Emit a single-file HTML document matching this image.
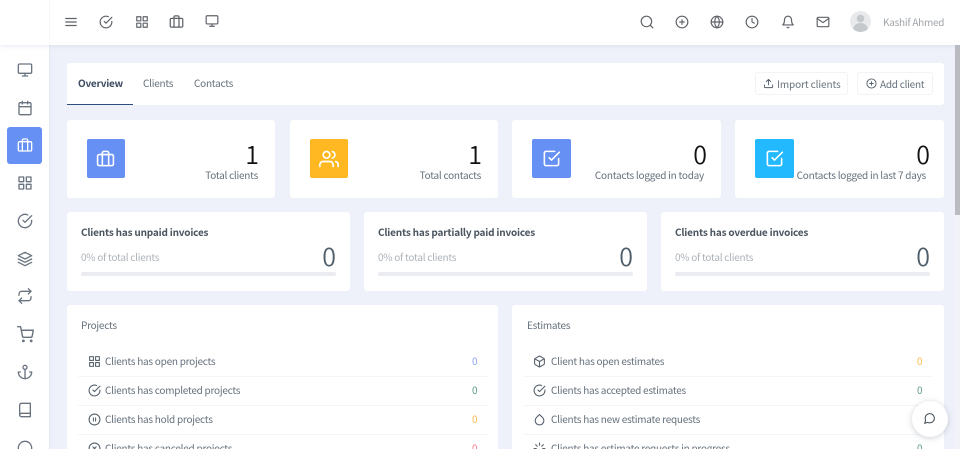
<!DOCTYPE html>
<html lang="en"><head><meta charset="utf-8"><title>Clients</title>
<style>
*{box-sizing:border-box}
html,body{margin:0;padding:0;width:960px;height:449px;overflow:hidden}
#w{width:960px;height:449px;overflow:hidden;position:relative;background:#eef1f9;font-family:"Noto Sans CJK JP","Liberation Sans",sans-serif;color:#4e5e6a;font-size:10px;letter-spacing:-.25px}
.a{position:absolute;white-space:nowrap}
.card{position:absolute;background:#fff;border-radius:3px}
svg{position:absolute;fill:none;stroke:currentColor;stroke-width:2;stroke-linecap:round;stroke-linejoin:round;overflow:visible}
.top{color:#5f6368}
.side{color:#6a7480}
.r{text-align:right}
.hr{position:absolute;height:1px;background:#f2f6fa}
.bar{position:absolute;height:4px;background:#eaecf2;border-radius:2px}
.t{font-size:10px;color:#65707b}
.b{font-size:10px;font-weight:700;color:#4a5560;letter-spacing:-.2px}
.m{font-size:10px;color:#adb3b9}
.n{font-size:25px;line-height:30px;color:#4e5e6a;font-weight:350;letter-spacing:0}
.k{font-size:25px;line-height:30px;color:#111;font-weight:350;letter-spacing:0}
</style></head><body>
<div id="w">

<div class="a" style="left:0;top:0;width:49px;height:449px;background:#fff;box-shadow:1px 0 2px rgba(190,195,215,.2)"></div>
<div class="a" style="left:0;top:0;width:960px;height:45px;background:#fff;box-shadow:0 1px 4px rgba(190,195,215,.35)"></div>
<div class="a" style="left:49px;top:0;width:1px;height:45px;background:#f8f8fa"></div>

<!-- scrollbar -->
<div class="a" style="left:955px;top:45px;width:5px;height:404px;background:#f1f3f9"></div>
<div class="a" style="left:955px;top:45px;width:5px;height:170px;background:#b9bbc0"></div>

<!-- top left icons -->
<svg class="top" style="left:64px;top:15px" width="14" height="14" viewBox="0 0 24 24" stroke-width="1.8"><path d="M3 6h18M3 12h18M3 18h18"/></svg>
<svg class="top" style="left:99px;top:15px" width="14" height="14" viewBox="0 0 24 24" stroke-width="1.9"><path d="M22 11.100V12a10 10 0 1 1-5.900-9.100"/><path d="M22 4 12 14l-3-3"/></svg>
<svg class="top" style="left:135px;top:15px" width="14" height="14" viewBox="0 0 24 24" stroke-width="1.9"><rect x="3" y="3" width="7" height="7"/><rect x="14" y="3" width="7" height="7"/><rect x="14" y="14" width="7" height="7"/><rect x="3" y="14" width="7" height="7"/></svg>
<svg class="top" style="left:169px;top:14px" width="15" height="15" viewBox="0 0 24 24" stroke-width="1.8"><rect x="2" y="7" width="20" height="14" rx="2"/><path d="M16 21V5a2 2 0 0 0-2-2h-4a2 2 0 0 0-2 2v16"/></svg>
<svg class="top" style="left:205px;top:14px" width="14" height="14" viewBox="0 0 24 24" stroke-width="1.9"><rect x="2" y="3" width="20" height="14" rx="2"/><path d="M8 21h8M12 17v4"/></svg>

<!-- top right icons -->
<svg class="top" style="left:640px;top:15px" width="14" height="14" viewBox="0 0 24 24" stroke-width="1.9"><circle cx="11" cy="11" r="9"/><path d="m22 22-4.500-4.500"/></svg>
<svg class="top" style="left:675px;top:15px" width="14" height="14" viewBox="0 0 24 24" stroke-width="1.9"><circle cx="12" cy="12" r="10"/><path d="M12 8v8M8 12h8"/></svg>
<svg class="top" style="left:710px;top:15px" width="14" height="14" viewBox="0 0 24 24" stroke-width="1.9"><circle cx="12" cy="12" r="10"/><path d="M2 12h20M12 2a15 15 0 0 1 4 10 15 15 0 0 1-4 10 15 15 0 0 1-4-10 15 15 0 0 1 4-10z"/></svg>
<svg class="top" style="left:745px;top:15px" width="14" height="14" viewBox="0 0 24 24" stroke-width="1.9"><circle cx="12" cy="12" r="10"/><path d="M12 6v6l4 2"/></svg>
<svg class="top" style="left:781px;top:15px" width="14" height="14" viewBox="0 0 24 24" stroke-width="1.9"><path d="M18 8a6 6 0 0 0-12 0c0 7-3 9-3 9h18s-3-2-3-9"/><path d="M13.700 21a2 2 0 0 1-3.400 0"/></svg>
<svg class="top" style="left:816px;top:15px" width="14" height="14" viewBox="0 0 24 24" stroke-width="1.9"><path d="M4 4h16a2 2 0 0 1 2 2v12a2 2 0 0 1-2 2H4a2 2 0 0 1-2-2V6a2 2 0 0 1 2-2z"/><path d="m22 6-10 7L2 6"/></svg>

<!-- avatar -->
<svg style="left:850px;top:11px;stroke:none" width="21" height="21" viewBox="0 0 21 21"><circle cx="10.500" cy="10.500" r="10.500" fill="#e8e9eb"/><circle cx="10.500" cy="7.500" r="3.800" fill="#c6c9cc"/><path d="M3.200 18c.6-4 3.600-6 7.300-6s6.700 2 7.300 6a10.500 10.500 0 0 1-14.600 0z" fill="#c6c9cc"/></svg>
<div class="a" style="left:883px;top:14px;font-size:10px;line-height:15px;color:#a0a5aa;letter-spacing:-.25px">Kashif Ahmed</div>

<!-- sidebar icons -->
<svg class="side" style="left:17px;top:62px" width="16" height="16" viewBox="0 0 24 24" stroke-width="1.8"><rect x="2" y="3" width="20" height="14" rx="2"/><path d="M8 21h8M12 17v4"/></svg>
<svg class="side" style="left:17px;top:100px" width="16" height="16" viewBox="0 0 24 24" stroke-width="1.8"><rect x="3" y="4" width="18" height="18" rx="2"/><path d="M16 2v4M8 2v4M3 10h18"/></svg>
<div class="a" style="left:7px;top:127px;width:35px;height:37px;background:#6690f4;border-radius:3px"></div>
<svg style="left:17px;top:137px;color:#fff" width="16" height="16" viewBox="0 0 24 24" stroke-width="1.8"><rect x="2" y="7" width="20" height="14" rx="2"/><path d="M16 21V5a2 2 0 0 0-2-2h-4a2 2 0 0 0-2 2v16"/></svg>
<svg class="side" style="left:17px;top:175px" width="16" height="16" viewBox="0 0 24 24" stroke-width="1.8"><rect x="3" y="3" width="7" height="7"/><rect x="14" y="3" width="7" height="7"/><rect x="14" y="14" width="7" height="7"/><rect x="3" y="14" width="7" height="7"/></svg>
<svg class="side" style="left:17px;top:213px" width="16" height="16" viewBox="0 0 24 24" stroke-width="1.8"><path d="M22 11.100V12a10 10 0 1 1-5.900-9.100"/><path d="M22 4 12 14l-3-3"/></svg>
<svg class="side" style="left:17px;top:251px" width="16" height="16" viewBox="0 0 24 24" stroke-width="1.8"><path d="M12 2 2 7l10 5 10-5-10-5z"/><path d="m2 17 10 5 10-5M2 12l10 5 10-5"/></svg>
<svg class="side" style="left:17px;top:288px" width="16" height="16" viewBox="0 0 24 24" stroke-width="1.800"><path d="m17 1 4 4-4 4"/><path d="M3 11V9a4 4 0 0 1 4-4h14"/><path d="m7 23-4-4 4-4"/><path d="M21 13v2a4 4 0 0 1-4 4H3"/></svg>
<svg class="side" style="left:17px;top:326px" width="17" height="17" viewBox="0 0 24 24" stroke-width="1.800"><circle cx="9" cy="21" r="1"/><circle cx="20" cy="21" r="1"/><path d="M1 1h4l2.700 13.400a2 2 0 0 0 2 1.600h9.700a2 2 0 0 0 2-1.600L23 6H6"/></svg>
<svg class="side" style="left:17px;top:364px" width="16" height="16" viewBox="0 0 24 24" stroke-width="1.800"><circle cx="12" cy="5" r="3"/><path d="M12 22V8M5 12H2a10 10 0 0 0 20 0h-3"/></svg>
<svg class="side" style="left:17px;top:402px" width="16" height="16" viewBox="0 0 24 24" stroke-width="1.800"><path d="M4 19.500A2.500 2.500 0 0 1 6.500 17H20"/><path d="M6.500 2H20v20H6.500A2.500 2.500 0 0 1 4 19.500v-15A2.500 2.500 0 0 1 6.500 2z"/></svg>
<svg class="side" style="left:17px;top:440px" width="16" height="16" viewBox="0 0 24 24" stroke-width="1.800"><circle cx="12" cy="12" r="10"/></svg>

<!-- tabs -->
<div class="card" style="left:67px;top:63px;width:877px;height:42px"></div>
<div class="a" style="left:67px;top:104px;width:66px;height:1px;background:#2e4c7e"></div>
<div class="a" style="left:78px;top:75px;font-size:10px;line-height:16px;font-weight:700;color:#3d4c63">Overview</div>
<div class="a" style="left:143px;top:75px;font-size:10px;line-height:16px;color:#66717c">Clients</div>
<div class="a" style="left:194px;top:75px;font-size:10px;line-height:16px;color:#66717c">Contacts</div>

<div class="a" style="left:755px;top:72px;width:93px;height:23px;border:1px solid #f1f3f6;border-radius:3px;background:#fff"></div>
<svg style="left:763px;top:78px;color:#55606a" width="11" height="11" viewBox="0 0 24 24"><path d="M21 15v4a2 2 0 0 1-2 2H5a2 2 0 0 1-2-2v-4M17 8l-5-5-5 5M12 3v12"/></svg>
<div class="a" style="left:777px;top:76px;font-size:10px;line-height:16px;color:#66717c;letter-spacing:-.1px">Import clients</div>
<div class="a" style="left:857px;top:72px;width:76px;height:23px;border:1px solid #f1f3f6;border-radius:3px;background:#fff"></div>
<svg style="left:866px;top:78px;color:#55606a" width="11" height="11" viewBox="0 0 24 24"><circle cx="12" cy="12" r="10"/><path d="M12 8v8M8 12h8"/></svg>
<div class="a" style="left:880px;top:76px;font-size:10px;line-height:16px;color:#66717c">Add client</div>

<!-- row 1 -->
<div class="card" style="left:67px;top:120px;width:208px;height:78px"></div>
<div class="card" style="left:290px;top:120px;width:208px;height:78px"></div>
<div class="card" style="left:512px;top:120px;width:209px;height:78px"></div>
<div class="card" style="left:735px;top:120px;width:209px;height:78px"></div>

<div class="a" style="left:87px;top:139px;width:38px;height:39px;background:#6690f4;border-radius:2px"></div>
<svg style="left:96px;top:149px;color:#fff" width="19" height="19" viewBox="0 0 24 24" stroke-width="1.500"><rect x="2" y="7" width="20" height="14" rx="2"/><path d="M16 21V5a2 2 0 0 0-2-2h-4a2 2 0 0 0-2 2v16"/></svg>
<div class="a" style="left:310px;top:139px;width:38px;height:39px;background:#ffb822;border-radius:2px"></div>
<svg style="left:319px;top:149px;color:#fff" width="20" height="20" viewBox="0 0 24 24" stroke-width="1.500"><path d="M17 21v-2a4 4 0 0 0-4-4H5a4 4 0 0 0-4 4v2"/><circle cx="9" cy="7" r="4"/><path d="M23 21v-2a4 4 0 0 0-3-3.900M16 3.100a4 4 0 0 1 0 7.800"/></svg>
<div class="a" style="left:532px;top:139px;width:39px;height:39px;background:#6690f4;border-radius:2px"></div>
<svg style="left:542px;top:149px;color:#fff" width="19" height="19" viewBox="0 0 24 24" stroke-width="1.500"><path d="m9 11 3 3L22 4"/><path d="M21 12v7a2 2 0 0 1-2 2H5a2 2 0 0 1-2-2V5a2 2 0 0 1 2-2h11"/></svg>
<div class="a" style="left:755px;top:139px;width:39px;height:39px;background:#22b9ff;border-radius:2px"></div>
<svg style="left:765px;top:149px;color:#fff" width="19" height="19" viewBox="0 0 24 24" stroke-width="1.500"><path d="m9 11 3 3L22 4"/><path d="M21 12v7a2 2 0 0 1-2 2H5a2 2 0 0 1-2-2V5a2 2 0 0 1 2-2h11"/></svg>

<div class="a k r" style="right:701px;top:139px">1</div>
<div class="a k r" style="right:478px;top:139px">1</div>
<div class="a k r" style="right:253px;top:139px">0</div>
<div class="a k r" style="right:30px;top:139px">0</div>
<div class="a t r" style="right:702px;top:167px;line-height:16px">Total clients</div>
<div class="a t r" style="right:479px;top:167px;line-height:16px">Total contacts</div>
<div class="a t r" style="right:256px;top:167px;line-height:16px">Contacts logged in today</div>
<div class="a t r" style="right:34px;top:167px;line-height:16px">Contacts logged in last 7 days</div>

<!-- row 2 -->
<div class="card" style="left:67px;top:212px;width:283px;height:79px"></div>
<div class="card" style="left:364px;top:212px;width:283px;height:79px"></div>
<div class="card" style="left:661px;top:212px;width:283px;height:79px"></div>
<div class="a b" style="left:81px;top:224px;line-height:16px">Clients has unpaid invoices</div>
<div class="a b" style="left:378px;top:224px;line-height:16px">Clients has partially paid invoices</div>
<div class="a b" style="left:675px;top:224px;line-height:16px">Clients has overdue invoices</div>
<div class="a m" style="left:81px;top:249px;line-height:16px">0% of total clients</div>
<div class="a m" style="left:378px;top:249px;line-height:16px">0% of total clients</div>
<div class="a m" style="left:675px;top:249px;line-height:16px">0% of total clients</div>
<div class="a n r" style="right:624px;top:241px">0</div>
<div class="a n r" style="right:327px;top:241px">0</div>
<div class="a n r" style="right:30px;top:241px">0</div>
<div class="bar" style="left:81px;top:272px;width:255px"></div>
<div class="bar" style="left:378px;top:272px;width:255px"></div>
<div class="bar" style="left:675px;top:272px;width:255px"></div>

<!-- row 3 -->
<div class="card" style="left:67px;top:305px;width:431px;height:160px"></div>
<div class="card" style="left:512px;top:305px;width:432px;height:160px"></div>
<div class="a t" style="left:81px;top:317px;line-height:16px">Projects</div>
<div class="a t" style="left:527px;top:317px;line-height:16px">Estimates</div>

<div class="hr" style="left:78px;top:376px;width:410px"></div>
<div class="hr" style="left:78px;top:405px;width:410px"></div>
<div class="hr" style="left:78px;top:434px;width:410px"></div>
<div class="hr" style="left:523px;top:376px;width:410px"></div>
<div class="hr" style="left:523px;top:405px;width:410px"></div>
<div class="hr" style="left:523px;top:434px;width:410px"></div>

<svg style="left:88px;top:355px;color:#56616c" width="13" height="13" viewBox="0 0 24 24"><rect x="3" y="3" width="7" height="7"/><rect x="14" y="3" width="7" height="7"/><rect x="14" y="14" width="7" height="7"/><rect x="3" y="14" width="7" height="7"/></svg>
<svg style="left:88px;top:384px;color:#56616c" width="13" height="13" viewBox="0 0 24 24"><path d="M22 11.100V12a10 10 0 1 1-5.900-9.100"/><path d="M22 4 12 14l-3-3"/></svg>
<svg style="left:88px;top:413px;color:#56616c" width="13" height="13" viewBox="0 0 24 24"><circle cx="12" cy="12" r="10"/><path d="M10 15V9M14 15V9"/></svg>
<svg style="left:88px;top:442px;color:#56616c" width="13" height="13" viewBox="0 0 24 24"><circle cx="12" cy="12" r="10"/><path d="m15 9-6 6M9 9l6 6"/></svg>

<div class="a t" style="left:105px;top:353px;line-height:16px">Clients has open projects</div>
<div class="a t" style="left:105px;top:382px;line-height:16px">Clients has completed projects</div>
<div class="a t" style="left:105px;top:411px;line-height:16px">Clients has hold projects</div>
<div class="a t" style="left:105px;top:440px;line-height:16px">Clients has canceled projects</div>
<div class="a" style="left:472px;top:353px;line-height:16px;color:#8fa5f5">0</div>
<div class="a" style="left:472px;top:382px;line-height:16px;color:#5c9a8a">0</div>
<div class="a" style="left:472px;top:411px;line-height:16px;color:#ffb84d">0</div>
<div class="a" style="left:472px;top:440px;line-height:16px;color:#f77a8c">0</div>

<svg style="left:533px;top:355px;color:#56616c" width="13" height="13" viewBox="0 0 24 24"><path d="M21 16V8a2 2 0 0 0-1-1.700l-7-4a2 2 0 0 0-2 0l-7 4A2 2 0 0 0 3 8v8a2 2 0 0 0 1 1.700l7 4a2 2 0 0 0 2 0l7-4a2 2 0 0 0 1-1.700z"/><path d="M3.300 7 12 12l8.700-5M12 22V12"/></svg>
<svg style="left:533px;top:384px;color:#56616c" width="13" height="13" viewBox="0 0 24 24"><path d="M22 11.100V12a10 10 0 1 1-5.900-9.100"/><path d="M22 4 12 14l-3-3"/></svg>
<svg style="left:533px;top:413px;color:#56616c" width="13" height="13" viewBox="0 0 24 24"><path d="m12 2.700 5.700 5.700a8 8 0 1 1-11.300 0z"/></svg>
<svg style="left:533px;top:442px;color:#56616c" width="13" height="13" viewBox="0 0 24 24"><path d="M12 2v4M12 18v4M4.900 4.900l2.900 2.900M16.200 16.200l2.900 2.900M2 12h4M18 12h4M4.900 19.100l2.900-2.900M16.200 7.800l2.900-2.900"/></svg>

<div class="a t" style="left:551px;top:353px;line-height:16px">Client has open estimates</div>
<div class="a t" style="left:551px;top:382px;line-height:16px">Clients has accepted estimates</div>
<div class="a t" style="left:551px;top:411px;line-height:16px">Clients has new estimate requests</div>
<div class="a t" style="left:551px;top:440px;line-height:16px">Clients has estimate requests in progress</div>
<div class="a" style="left:917px;top:353px;line-height:16px;color:#ffb84d">0</div>
<div class="a" style="left:917px;top:382px;line-height:16px;color:#5c9a8a">0</div>
<div class="a" style="left:917px;top:440px;line-height:16px;color:#5c9a8a">0</div>

<!-- chat -->
<div class="a" style="left:912px;top:401px;width:36px;height:36px;border-radius:50%;background:#fff;box-shadow:0 1px 6px rgba(90,100,120,.3)"></div>
<svg style="left:923px;top:412px;color:#48525c" width="13" height="13" viewBox="0 0 24 24" stroke-width="2"><path d="M21 11.500a8.400 8.400 0 0 1-.9 3.800 8.500 8.500 0 0 1-7.600 4.700 8.400 8.400 0 0 1-3.800-.9L3 21l1.900-5.700a8.400 8.400 0 0 1-.9-3.800 8.500 8.500 0 0 1 4.700-7.600 8.400 8.400 0 0 1 3.800-.9h.5a8.500 8.500 0 0 1 8 8z"/></svg>

</div>
</body></html>
